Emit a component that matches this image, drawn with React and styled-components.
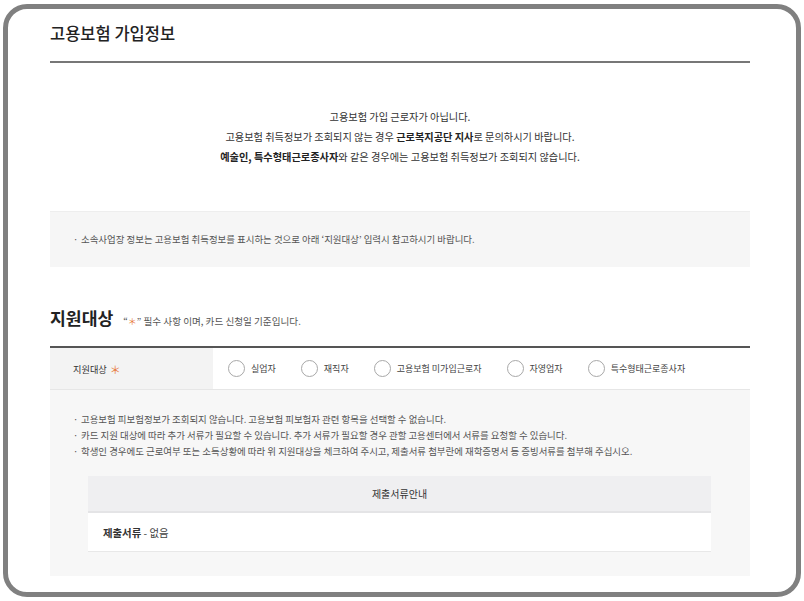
import React, { useState } from "react";
import styled, { createGlobalStyle } from "styled-components";

const GlobalStyle = createGlobalStyle`
  html, body {
    margin: 0;
    padding: 0;
    background: #ffffff;
  }
  body {
    font-family: "Noto Sans CJK KR", "Noto Sans", sans-serif;
    color: #333;
  }
  * {
    box-sizing: border-box;
  }
`;

const Frame = styled.div`
  margin: 4px 3px 0 3px;
  width: 798px;
  height: 593px;
  border: 5px solid #808080;
  border-radius: 24px;
  background: #fff;
  overflow: hidden;
`;

const Content = styled.div`
  width: 700px;
  margin-left: 42px;
  padding-top: 14px;
`;

const PageTitle = styled.h2`
  margin: 0;
  padding-bottom: 18px;
  font-size: 16.5px;
  line-height: 20px;
  font-weight: 500;
  color: #222;
  border-bottom: 2px solid #777;
`;

const Message = styled.div`
  margin: 44px 0;
  text-align: center;
  font-size: 10.2px;
  line-height: 20px;
  color: #333;

  p {
    margin: 0;
  }

  strong {
    font-weight: 700;
    color: #222;
  }
`;

const NoticeBox = styled.div`
  background: #f6f6f6;
  border-top: 1px solid #eeeeee;
  padding: 20px 23px;
`;

const BulletList = styled.ul`
  margin: 0;
  padding: 0;
  list-style: none;
  font-size: 9.45px;
  line-height: ${(p) => p.$lh || 15}px;
  color: #555;

  li {
    display: flex;
  }

  li::before {
    content: "·";
    flex: 0 0 8px;
  }
`;

const SectionHead = styled.div`
  display: flex;
  align-items: baseline;
  gap: 10px;
  margin-top: 40px;
  margin-bottom: 17px;
`;

const SectionTitle = styled.h3`
  margin: 0;
  font-size: 17.2px;
  line-height: 22px;
  font-weight: 700;
  color: #222;
`;

const SectionNote = styled.span`
  font-size: 9.6px;
  color: #555;
`;

const Star = styled.span`
  color: #e8793a;
  font-weight: 400;
  font-size: ${(p) => p.$size || 10}px;
`;

const FormRow = styled.div`
  display: flex;
  border-top: 2px solid #555;
  border-bottom: 1px solid #e6e6e6;
  height: 44px;
`;

const FormLabel = styled.div`
  flex: 0 0 163px;
  display: flex;
  align-items: center;
  gap: 3px;
  padding-left: 23px;
  background: #f3f3f3;
  font-size: 9.2px;
  color: #333;
`;

const RadioGroup = styled.div`
  display: flex;
  align-items: center;
  gap: 25px;
  padding-left: 15px;
`;

const RadioItem = styled.label`
  display: flex;
  align-items: center;
  gap: 6px;
  font-size: 9px;
  color: #444;
  cursor: pointer;
`;

const RadioInput = styled.input`
  appearance: none;
  margin: 0;
  width: 17px;
  height: 17px;
  border: 1px solid #a8a8a8;
  border-radius: 50%;
  background: #fff;
  cursor: pointer;

  &:checked {
    border-color: #555;
    background: radial-gradient(circle, #555 0 4px, #fff 4.5px);
  }
`;

const GuideArea = styled.div`
  background: #f7f7f7;
  padding: 21px 39px 24px 38px;

  ${BulletList} {
    margin-left: -15px;
  }
`;

const DocTable = styled.div`
  margin-top: 17px;
  background: #fff;
  border-bottom: 1px solid #e8e8e8;
`;

const DocHead = styled.div`
  height: 37px;
  display: flex;
  align-items: center;
  justify-content: center;
  background: #efeff1;
  border-bottom: 2px solid #e4e4e6;
  font-size: 10px;
  color: #333;
`;

const DocBody = styled.div`
  height: 38px;
  display: flex;
  align-items: center;
  padding-left: 15px;
  font-size: 10.4px;
  color: #444;

  strong {
    font-weight: 700;
    color: #333;
  }
`;

const targets = [
  "실업자",
  "재직자",
  "고용보험 미가입근로자",
  "자영업자",
  "특수형태근로종사자",
];

const guides = [
  "고용보험 피보험정보가 조회되지 않습니다. 고용보험 피보험자 관련 항목을 선택할 수 없습니다.",
  "카드 지원 대상에 따라 추가 서류가 필요할 수 있습니다. 추가 서류가 필요할 경우 관할 고용센터에서 서류를 요청할 수 있습니다.",
  "학생인 경우에도 근로여부 또는 소득상황에 따라 위 지원대상을 체크하여 주시고, 제출서류 첨부란에 재학증명서 등 증빙서류를 첨부해 주십시오.",
];

export default function App() {
  const [target, setTarget] = useState("");

  return (
    <>
      <GlobalStyle />
      <Frame>
        <Content>
          <PageTitle>고용보험 가입정보</PageTitle>

          <Message>
            <p>고용보험 가입 근로자가 아닙니다.</p>
            <p>
              고용보험 취득정보가 조회되지 않는 경우 <strong>근로복지공단 지사</strong>로 문의하시기 바랍니다.
            </p>
            <p>
              <strong>예술인, 특수형태근로종사자</strong>와 같은 경우에는 고용보험 취득정보가 조회되지 않습니다.
            </p>
          </Message>

          <NoticeBox>
            <BulletList>
              <li>소속사업장 정보는 고용보험 취득정보를 표시하는 것으로 아래 ‘지원대상’ 입력시 참고하시기 바랍니다.</li>
            </BulletList>
          </NoticeBox>

          <SectionHead>
            <SectionTitle>지원대상</SectionTitle>
            <SectionNote>
              “<Star $size={9}>＊</Star>” 필수 사항 이며, 카드 신청일 기준입니다.
            </SectionNote>
          </SectionHead>

          <FormRow>
            <FormLabel>
              지원대상 <Star $size={11}>＊</Star>
            </FormLabel>
            <RadioGroup>
              {targets.map((t) => (
                <RadioItem key={t}>
                  <RadioInput
                    type="radio"
                    name="target"
                    checked={target === t}
                    onChange={() => setTarget(t)}
                  />
                  {t}
                </RadioItem>
              ))}
            </RadioGroup>
          </FormRow>

          <GuideArea>
            <BulletList $lh={16}>
              {guides.map((g) => (
                <li key={g}>{g}</li>
              ))}
            </BulletList>

            <DocTable>
              <DocHead>제출서류안내</DocHead>
              <DocBody>
                <strong>제출서류</strong>&nbsp;- 없음
              </DocBody>
            </DocTable>
          </GuideArea>
        </Content>
      </Frame>
    </>
  );
}
